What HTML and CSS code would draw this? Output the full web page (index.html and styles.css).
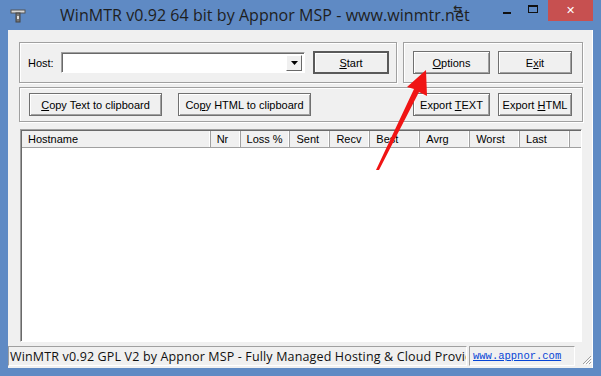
FILE: index.html
```html
<!DOCTYPE html>
<html>
<head>
<meta charset="utf-8">
<link rel="stylesheet" href="styles.css">
</head>
<body>
<div class="window">
  <div class="titlebar">
    <svg class="appicon" width="16" height="16" viewBox="0 0 16 16">
      <rect x="1" y="2" width="14" height="3" fill="#d8d8d8" stroke="#555" stroke-width="1"/>
      <rect x="6" y="5" width="4" height="9" fill="#777" stroke="#444" stroke-width="1"/>
      <rect x="7" y="8" width="2" height="3" fill="#ddd"/>
    </svg>
    <div class="title">WinMTR v0.92 64 bit by Appnor MSP - www.winmtr.net</div>
    <div class="cap">
      <div class="capbtn"><span class="minbar"></span></div>
      <div class="capbtn"><span class="maxbox"></span></div>
      <div class="capbtn close">✕</div>
    </div>
    <span class="cursor">⇆</span>
  </div>
  <div class="client">
    <div class="row1">
      <div class="group g1">
        <span class="lbl">Host:</span>
        <div class="combo"><div class="ddbtn"><svg width="7" height="4" viewBox="0 0 7 4"><path d="M0 0H7L3.5 4Z" fill="#000"/></svg></div></div>
        <div class="btn btn-def w-start"><span><u>S</u>tart</span></div>
      </div>
      <div class="group g2">
        <div class="btn w-opt"><span><u>O</u>ptions</span></div>
        <div class="btn w-exit"><span>E<u>x</u>it</span></div>
      </div>
    </div>
    <div class="group g3">
      <div class="btn w-copy"><span><u>C</u>opy Text to clipboard</span></div>
      <div class="btn w-copy"><span>Co<u>p</u>y HTML to clipboard</span></div>
      <div class="spacer"></div>
      <div class="btn w-opt"><span>Export <u>T</u>EXT</span></div>
      <div class="btn w-exit"><span>Export <u>H</u>TML</span></div>
    </div>
    <div class="list">
      <div class="hdr">
        <div class="col c-host">Hostname</div>
        <div class="col c-nr">Nr</div>
        <div class="col c-loss">Loss %</div>
        <div class="col c-40">Sent</div>
        <div class="col c-40">Recv</div>
        <div class="col c-50">Best</div>
        <div class="col c-50">Avrg</div>
        <div class="col c-50">Worst</div>
        <div class="col c-50">Last</div>
        <div class="col c-rest"></div>
      </div>
    </div>
    <div class="status">
      <div class="panel p1"><span>WinMTR v0.92 GPL V2 by Appnor MSP - Fully Managed Hosting &amp; Cloud Provider</span></div>
      <div class="panel p2"><span class="link">www.appnor.com</span></div>
      <svg class="grip" width="12" height="12" viewBox="0 0 12 12">
        <path d="M11 3L3 11M11 6L6 11M11 9L9 11" stroke="#a0a0a0" stroke-width="1"/>
        <path d="M12 4L4 12M12 7L7 12M12 10L10 12" stroke="#fff" stroke-width="1"/>
      </svg>
    </div>
  </div>
  <svg class="arrow" width="601" height="376" viewBox="0 0 601 376">
    <path d="M376 170 L379 170 L419 92 L427 96 L426 70 L407 87 L414 89 Z" fill="#f01414"/>
  </svg>
</div>
</body>
</html>
```
FILE: styles.css
```css
* { box-sizing: border-box; }
html, body { margin: 0; padding: 0; }
body { width: 601px; height: 376px; overflow: hidden; background: #5d89c3; }
.window { position: relative; width: 601px; height: 376px; display: flex; flex-direction: column; background: #5f8ac4; }
.titlebar { height: 30px; display: flex; align-items: flex-start; position: relative; }
.appicon { margin: 8px 0 0 10px; }
.title { margin: 4px 0 0 34px; font-family: "Open Sans", "Noto Sans", sans-serif; font-size: 16px; color: #1e1e1e; letter-spacing: 0.05px; white-space: nowrap; }
.cursor { position: absolute; left: 453px; top: 3px; font-family: "DejaVu Sans", sans-serif; font-size: 11px; font-weight: bold; color: #222; }
.cap { margin-left: auto; margin-right: 8px; display: flex; height: 21px; }
.capbtn { width: 26px; height: 21px; display: flex; align-items: center; justify-content: center; }
.minbar { width: 8px; height: 2px; background: #111; margin-top: 4px; }
.maxbox { width: 10px; height: 8px; border: 1px solid #111; border-top-width: 2px; margin-top: -3px; }
.capbtn.close { width: 45px; background: #c75050; color: #fff; font-size: 11px; font-family: "DejaVu Sans", sans-serif; font-weight: bold; margin-left: 2px; }
.client { margin: 0 8px 8px 8px; flex: 1; background: #f0f0f0; display: flex; flex-direction: column; padding: 12px 0 0 11px; font-family: "Liberation Sans", Arial, sans-serif; font-size: 11px; color: #000; border-right: 1px solid #fff; }
.row1 { display: flex; gap: 6px; }
.group { border: 1px solid #a0a0a0; box-shadow: inset 1px 1px #fff, 1px 1px #fff; display: flex; align-items: center; }
.g1 { width: 378px; height: 41px; padding-left: 8px; }
.g2 { width: 180px; height: 41px; padding-left: 9px; gap: 8px; }
.g3 { width: 564px; height: 35px; margin-top: 4px; padding-left: 9px; }
.g3 .w-copy + .w-copy { margin-left: 16px; }
.g3 .w-exit { margin-left: 8px; margin-right: 10px; }
.spacer { flex: 1; }
.lbl { width: 33px; }
.combo { width: 244px; height: 21px; background: #fff; border: 1px solid; border-color: #a0a0a0 #fff #fff #a0a0a0; box-shadow: inset 1px 1px #696969; display: flex; justify-content: flex-end; padding: 2px 2px 2px 0; }
.ddbtn { width: 16px; height: 16px; background: #f0f0f0; border: 1px solid; border-color: #fff #696969 #696969 #fff; display: flex; align-items: center; justify-content: center; }
.btn { height: 23px; border: 1px solid #707070; box-shadow: inset 1px 1px #fff, inset -1px -1px #a0a0a0; background: #f0f0f0; display: flex; align-items: center; justify-content: center; white-space: nowrap; }
.btn-def { border: 2px solid #5a5a5a; box-shadow: inset 1px 1px #fff; margin-left: 8px; }
.w-start { width: 76px; }
.w-opt { width: 77px; }
.w-exit { width: 74px; }
.w-copy { width: 133px; }
.list { margin: 7px 0 0 1px; width: 562px; height: 213px; background: #fff; border: 1px solid #828790; border-color: #a0a0a0 #fff #fff #a0a0a0; box-shadow: inset 1px 1px #696969; padding: 1px 0 0 1px; }
.hdr { display: flex; height: 17px; background: #f0f0f0; border-bottom: 1px solid #a0a0a0; }
.col { height: 16px; line-height: 16px; padding-left: 6px; border-right: 1px solid #a0a0a0; white-space: nowrap; overflow: hidden; box-shadow: inset -1px 0 #fff; }
.c-host { width: 189px; }
.c-nr { width: 30px; }
.c-loss { width: 50px; }
.c-40 { width: 40px; }
.c-50 { width: 50px; }
.c-rest { width: 11px; border-right: none; box-shadow: none; }
.status { margin: 4px 0 0 -11px; height: 20px; display: flex; align-items: stretch; position: relative; }
.panel { border: 1px solid; border-color: #a0a0a0 #fff #fff #a0a0a0; overflow: hidden; white-space: nowrap; display: flex; align-items: center; }
.p1 { width: 459px; padding-left: 1px; font-family: "Open Sans", "Noto Sans", sans-serif; font-size: 12.5px; letter-spacing: 0.15px; color: #111; }
.p2 { width: 106px; margin-left: 2px; padding-left: 3px; }
.link { font-family: "Liberation Mono", monospace; font-size: 10.5px; color: #0645d6; text-decoration: underline; }
.grip { position: absolute; right: 0; bottom: 1px; }
.arrow { position: absolute; left: 0; top: 0; pointer-events: none; }
```
